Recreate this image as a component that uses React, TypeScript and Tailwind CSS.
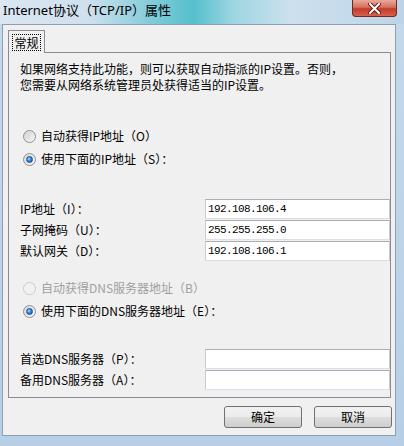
import { ReactNode } from 'react';

function Radio({ checked = false, disabled = false }: { checked?: boolean; disabled?: boolean }) {
  return (
    <span
      className={`relative flex h-[13px] w-[13px] shrink-0 items-center justify-center rounded-full border ${
        disabled
          ? 'border-[#c9cacb] bg-[#f4f4f4]'
          : 'border-[#8e8f8f] bg-[linear-gradient(135deg,#d8d8d8,#f8f8f8)]'
      }`}
    >
      {checked ? (
        <span className="h-[7px] w-[7px] rounded-full border border-[#1b4f8c] bg-[radial-gradient(circle_at_35%_35%,#9fd3ff_0%,#3d8bd8_45%,#16488c_100%)]" />
      ) : (
        <span
          className={`h-[9px] w-[9px] rounded-full ${
            disabled ? 'bg-[#f0f0f0]' : 'bg-[linear-gradient(135deg,#cfd0d0,#f6f6f6)]'
          }`}
        />
      )}
    </span>
  );
}

function RadioRow({ label, checked, disabled }: { label: string; checked?: boolean; disabled?: boolean }) {
  return (
    <div className="flex h-[20px] items-center gap-[5px] pl-[3px]">
      <Radio checked={checked} disabled={disabled} />
      <span className={disabled ? 'text-[#a0a0a0]' : 'text-black'}>{label}</span>
    </div>
  );
}

function Field({ value = '' }: { value?: string }) {
  return (
    <div className="flex h-[20px] w-[185px] items-center border border-[#abadb3] border-b-[#dbdfe6] border-l-[#c8ccd2] border-r-[#c8ccd2] bg-white pl-[2px] font-['Liberation_Mono',monospace] text-[11px] tracking-[-0.6px] text-black">
      {value}
    </div>
  );
}

function FieldRow({ label, value, children }: { label: string; value?: string; children?: ReactNode }) {
  return (
    <div className="flex h-[20px] items-center">
      <span className="w-[185px] shrink-0">{label}</span>
      <Field value={value} />
      {children}
    </div>
  );
}

function Button({ label }: { label: string }) {
  return (
    <div className="flex h-[22px] w-[78px] items-center justify-center rounded-[3px] border border-[#707070] bg-[linear-gradient(#f2f2f2_0%,#ebebeb_48%,#dddddd_52%,#cfcfcf_100%)] text-[12px] text-black">
      {label}
    </div>
  );
}

export default function App() {
  return (
    <div className="flex h-[446px] w-[404px] flex-col overflow-hidden bg-[linear-gradient(#c5d9ec,#b6cfe6)] font-['Noto_Sans_CJK_SC',sans-serif] text-[12px] text-black">
      {/* 标题栏 */}
      <div className="relative h-[24px] shrink-0 bg-[linear-gradient(90deg,#dbe7f2_0%,#cfe0ee_22%,#7fcbd8_38%,#56bfcd_48%,#9ed6e2_58%,#cde0ee_72%,#bdd4e8_100%)]">
        <span className="block pl-[3px] font-['Noto_Sans','Noto_Sans_CJK_SC',sans-serif] text-[13px] leading-[21px] text-black">
          Internet协议（TCP/IP）属性
        </span>
        <div className="absolute right-[7px] top-0 flex h-[17px] w-[45px] items-center justify-center rounded-b-[4px] border border-t-0 border-[#6b2a22] bg-[linear-gradient(#e9a99a_0%,#d6705f_45%,#c23c2a_55%,#d9604a_100%)]">
          <svg width="13" height="11" viewBox="0 0 13 11">
            <path d="M2 1 L11 10 M11 1 L2 10" stroke="#5a1d16" strokeWidth="4" strokeLinecap="square" />
            <path d="M2 1 L11 10 M11 1 L2 10" stroke="#ffffff" strokeWidth="2" strokeLinecap="square" />
          </svg>
        </div>
      </div>

      {/* 窗口主体 */}
      <div className="flex flex-1 pb-[10px] pl-[2px] pr-[8px]">
        <div className="flex flex-1 flex-col border border-[#8f9fb0] bg-[#f0f0f0]">
          {/* 选项卡 */}
          <div className="flex pl-[5px] pt-[5px]">
            <div className="relative z-10 -mb-px flex h-[23px] w-[37px] items-center justify-center border border-b-0 border-[#898c95] bg-[#f0f0f0]">
              <span className="border border-dotted border-black px-[1px] leading-[15px]">常规</span>
            </div>
          </div>

          <div className="ml-[5px] mr-[4px] h-[346px] border border-[#898c95] pl-[11px] pt-[8px]">
            <p className="leading-[16px]">
              如果网络支持此功能，则可以获取自动指派的IP设置。否则，
              <br />
              您需要从网络系统管理员处获得适当的IP设置。
            </p>

            <div className="mt-[33px] flex flex-col gap-[3px]">
              <RadioRow label="自动获得IP地址（O）" />
              <RadioRow label="使用下面的IP地址（S）：" checked />
            </div>

            <div className="mt-[30px] flex flex-col gap-[1px]">
              <FieldRow label="IP地址（I）：" value="192.108.106.4" />
              <FieldRow label="子网掩码（U）：" value="255.255.255.0" />
              <FieldRow label="默认网关（D）：" value="192.108.106.1" />
            </div>

            <div className="mt-[17px] flex flex-col gap-[3px]">
              <RadioRow label="自动获得DNS服务器地址（B）" disabled />
              <RadioRow label="使用下面的DNS服务器地址（E）：" checked />
            </div>

            <div className="mt-[28px] flex flex-col gap-[1px]">
              <FieldRow label="首选DNS服务器（P）：" />
              <FieldRow label="备用DNS服务器（A）：" />
            </div>
          </div>

          {/* 按钮 */}
          <div className="flex justify-end gap-[12px] pr-[3px] pt-[8px]">
            <Button label="确定" />
            <Button label="取消" />
          </div>
        </div>
      </div>
    </div>
  );
}
